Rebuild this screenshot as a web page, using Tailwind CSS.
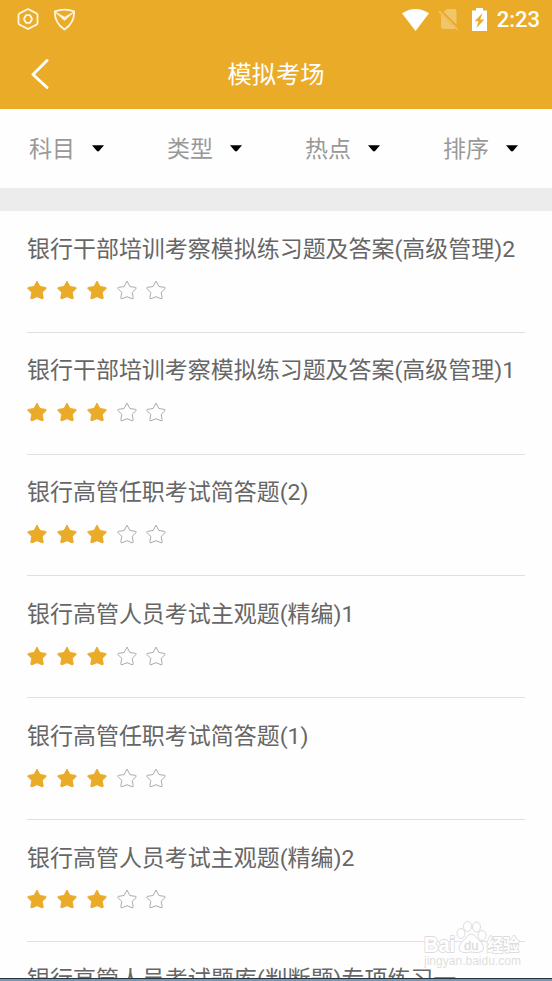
<!DOCTYPE html>
<html lang="zh-CN">
<head>
    <meta charset="UTF-8">
    <meta name="viewport" content="width=device-width, initial-scale=1.0">
    <title>模拟考场</title>
    <script src="https://cdn.jsdelivr.net/npm/@tailwindcss/browser@4"></script>
</head>
<body class="bg-white font-['Roboto','Noto_Sans_CJK_SC',sans-serif]">
    <!-- 图标 -->
    <svg class="hidden">
        <symbol id="star" viewBox="0 0 20 20">
            <path d="M10 1.1 L12.9 6.5 L18.6 7.4 Q19.8 7.7 19 8.6 L15.2 12.4 L16.2 17.8 Q16.3 19.2 15 18.7 L10 16.7 L5 18.7 Q3.7 19.2 3.8 17.8 L4.8 12.4 L1 8.6 Q.2 7.7 1.4 7.4 L7.1 6.5 Z" stroke-linejoin="round"/>
        </symbol>
        <symbol id="caret" viewBox="0 0 12 7">
            <path d="M0 .3 H12 L7.3 5.8 Q6 7 4.7 5.8 Z"/>
        </symbol>
    </svg>

    <div class="relative flex h-[981px] w-[552px] flex-col overflow-hidden bg-[#fefefe]">
        <header class="h-[109px] shrink-0 bg-[#eaab28] text-white">
            <!-- 状态栏 -->
            <div class="flex h-[39px] items-center pr-3 pl-[17px]">
                <svg class="mb-px size-[22px]" viewBox="0 0 22 22" fill="none" stroke="#fff6df" stroke-width="1.8" stroke-linejoin="round">
                    <path d="M11 1 L19.5 5.4 Q20.5 6 20.5 6.8 V15.2 Q20.5 16 19.5 16.6 L11 21 L2.5 16.6 Q1.5 16 1.5 15.2 V6.8 Q1.5 6 2.5 5.4 Z"/>
                    <path d="M9 7.2 H13 L15.1 11 L13 14.8 H9 L6.9 11 Z"/>
                </svg>
                <svg class="mb-px ml-[14px] size-[23px]" viewBox="0 0 23 23" fill="none" stroke="#fff6df" stroke-width="1.8" stroke-linejoin="round">
                    <path d="M1.9 3.4 Q11.5 -.2 21.1 3.4 Q21.8 14.5 11.5 21.6 Q1.2 14.5 1.9 3.4 Z"/>
                    <path d="M2.4 4.2 L11.5 12.4 L20.6 4.2 L11.5 9.2 Z" fill="#fff6df" stroke-width=".8"/>
                </svg>
                <svg class="ml-auto h-[22px] w-[27px]" viewBox="0 0 27 22" fill="#fff">
                    <path d="M0 4.3 Q13.5 -4.2 27 4.3 L13.5 22 Z"/>
                </svg>
                <svg class="mb-px ml-[9px] h-[22px] w-[21px]" viewBox="0 0 21 22">
                    <path d="M9 1 H16.5 Q18.5 1 18.5 3 V16.5 L5.5 3.8 Z M3 6.3 L17 20.5 Q16.7 21 16 21 H5 Q3 21 3 19 Z" fill="#f1c56a"/>
                    <path d="M1 3 L19.5 21.5" stroke="#f1c56a" stroke-width="1.6"/>
                </svg>
                <svg class="mb-px ml-[13px] h-[23px] w-[15px]" viewBox="0 0 15 23">
                    <path d="M4 0 H11 V2.5 H15 V23 H0 V2.5 H4 Z" fill="#fff"/>
                    <path d="M10.5 5 L2.6 13.2 H6.6 L4.4 20 L12.4 11.6 H8.2 Z" fill="#eaab28"/>
                </svg>
                <span class="mt-px ml-[10px] text-[22px] leading-6 font-medium">2:23</span>
            </div>
            <!-- 标题栏 -->
            <div class="grid h-[70px] grid-cols-3 items-center">
                <svg class="ml-[31px] h-[32px] w-[20px]" viewBox="0 0 20 32" fill="none" stroke="#fff" stroke-width="2.9" stroke-linecap="round" stroke-linejoin="round">
                    <path d="M16 2.5 L2 16.5 L16 29.5"/>
                </svg>
                <h1 class="pt-0.5 text-center text-[24.3px] leading-8">模拟考场</h1>
            </div>
        </header>

        <!-- 筛选 -->
        <nav class="grid h-[79px] shrink-0 grid-cols-4 text-[23px] text-[#999]">
            <div class="flex items-center pl-[29px]"><span class="pt-1">科目</span><svg class="ml-[17px] h-[7px] w-3 fill-black"><use href="#caret"/></svg></div>
            <div class="flex items-center pl-[29px]"><span class="pt-1">类型</span><svg class="ml-[17px] h-[7px] w-3 fill-black"><use href="#caret"/></svg></div>
            <div class="flex items-center pl-[29px]"><span class="pt-1">热点</span><svg class="ml-[17px] h-[7px] w-3 fill-black"><use href="#caret"/></svg></div>
            <div class="flex items-center pl-[29px]"><span class="pt-1">排序</span><svg class="ml-[17px] h-[7px] w-3 fill-black"><use href="#caret"/></svg></div>
        </nav>
        <div class="h-[23px] shrink-0 bg-[#ececec]"></div>

        <main id="exam-list" class="min-h-0 flex-1 overflow-hidden px-[27px]"></main>

        <!-- 水印 -->
        <div class="absolute top-[920px] left-[422px] w-[102px]">
            <svg class="h-[50px] w-[102px] font-['Liberation_Sans','Noto_Sans_CJK_SC',sans-serif]" viewBox="0 0 102 50" fill="#fff" stroke="#dcdcdc" stroke-width="1" stroke-linejoin="round">
                <text x="2" y="32" font-size="22" font-weight="bold" textLength="31" lengthAdjust="spacingAndGlyphs" stroke-width="1.8" paint-order="stroke">Bai</text>
                <ellipse cx="39" cy="13.5" rx="4" ry="5"/>
                <ellipse cx="45.5" cy="6.5" rx="4" ry="5"/>
                <ellipse cx="54.5" cy="7" rx="4" ry="5"/>
                <ellipse cx="60" cy="15.5" rx="4" ry="5"/>
                <path d="M49 14 Q53 14 55.5 19 Q62 24 61.5 29 Q60 34 49 32 Q38 34 37 29 Q36.500 24 43 19 Q46 14 49 14 Z"/>
                <text x="42" y="29.5" font-size="13" fill="#dcdcdc" stroke-width=".3">du</text>
                <text x="65" y="31" font-size="17" font-weight="bold" textLength="32" lengthAdjust="spacingAndGlyphs" stroke-width="1.8" paint-order="stroke">经验</text>
                <text x="2" y="44.5" font-size="12" fill="#dedede" stroke="none" textLength="97" lengthAdjust="spacingAndGlyphs">jingyan.baidu.com</text>
            </svg>
        </div>

        <div class="h-[3px] shrink-0 border-t border-[#27333f] bg-[#7895b3]"></div>
    </div>

    <script>
        const exams = [
            { title: '银行干部培训考察模拟练习题及答案(高级管理)2', stars: 3 },
            { title: '银行干部培训考察模拟练习题及答案(高级管理)1', stars: 3 },
            { title: '银行高管任职考试简答题(2)', stars: 3 },
            { title: '银行高管人员考试主观题(精编)1', stars: 3 },
            { title: '银行高管任职考试简答题(1)', stars: 3 },
            { title: '银行高管人员考试主观题(精编)2', stars: 3 },
            { title: '银行高管人员考试题库(判断题)专项练习一', stars: 3 }
        ];

        // 星级
        function renderStars(count) {
            let html = '';
            for (let i = 0; i < 5; i++) {
                const color = i < count ? 'fill-[#eaab28] stroke-[#eaab28]' : 'fill-none stroke-[#aaa]';
                html += `<svg class="size-5 ${color}"><use href="#star"/></svg>`;
            }
            return html;
        }

        document.getElementById('exam-list').innerHTML = exams.map(exam => `
            <section class="h-[121.8px] border-b border-[#e0e0e0] pt-[21.7px]">
                <h2 class="h-[34px] text-[22.97px] leading-[34px] whitespace-nowrap text-[#666]">${exam.title}</h2>
                <div class="mt-[13.7px] flex gap-[9.85px]">${renderStars(exam.stars)}</div>
            </section>`).join('');
    </script>
</body>
</html>
